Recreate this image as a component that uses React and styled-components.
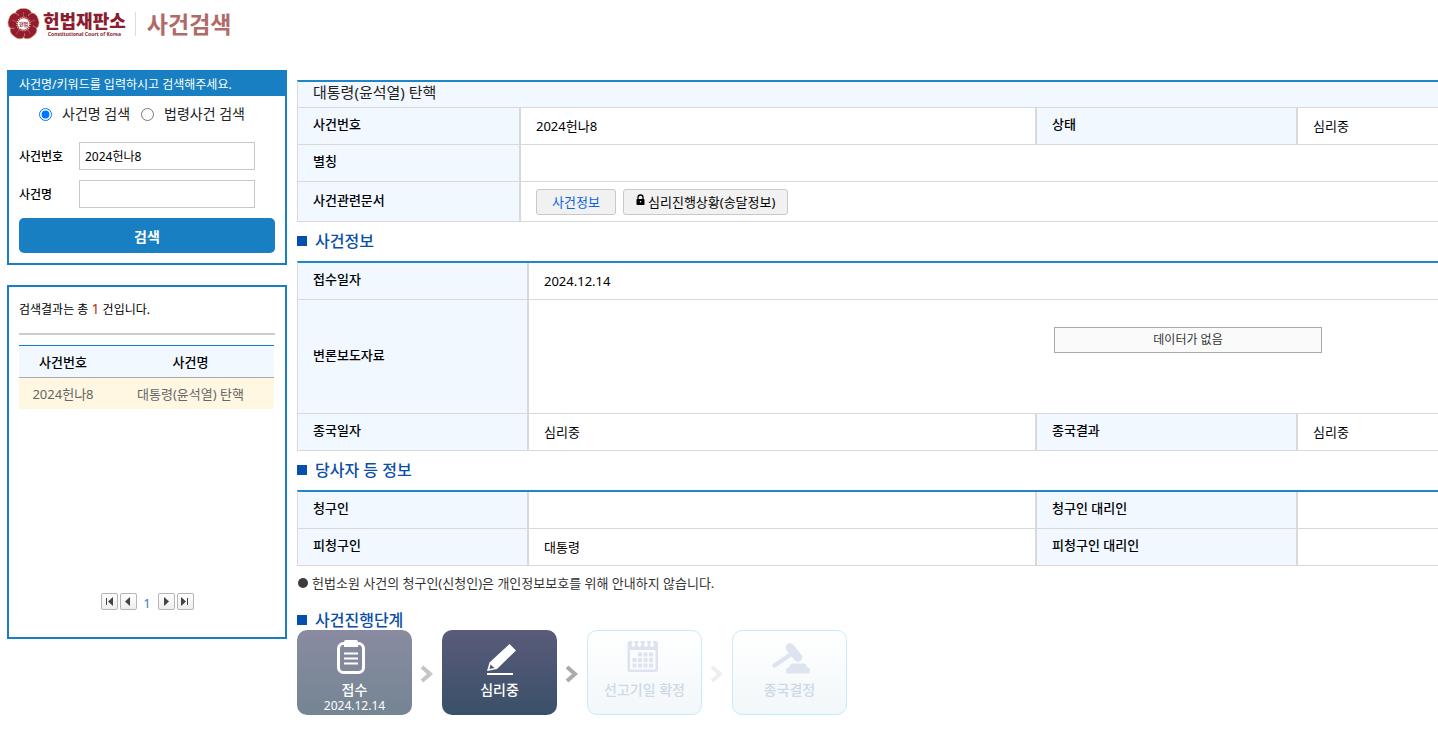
import React from "react";
import styled, { createGlobalStyle } from "styled-components";

const GlobalStyle = createGlobalStyle`
  * {
    box-sizing: border-box;
  }
  body {
    margin: 0;
    background: #fff;
    color: #000;
    font-family: "Noto Sans", "Noto Sans CJK KR", sans-serif;
    font-size: 13px;
    line-height: 20px;
  }
  input, button {
    font-family: inherit;
  }
`;

const Page = styled.div`
  padding: 8px 0 16px 7px;
`;

const Header = styled.header`
  display: flex;
  align-items: center;
  height: 32px;
`;

const Logo = styled.a`
  display: flex;
  align-items: center;
  gap: 3px;
  color: #8c1d2f;
  text-decoration: none;
`;

const LogoText = styled.span`
  display: flex;
  flex-direction: column;
  align-items: center;

  strong {
    font-size: 18px;
    line-height: 20px;
    font-weight: 800;
  }
  small {
    font-size: 5px;
    line-height: 6px;
    font-weight: 700;
  }
`;

const Title = styled.h1`
  margin: 0 0 0 9px;
  padding-left: 11px;
  border-left: 1px solid #ddd;
  color: #b06a68;
  font-size: 23px;
  line-height: 24px;
  font-weight: 700;
`;

const Content = styled.div`
  display: flex;
  align-items: flex-start;
  gap: 10px;
  margin-top: 30px;
`;

const Sidebar = styled.aside`
  flex: none;
  width: 280px;
  display: flex;
  flex-direction: column;
  gap: 20px;
`;

const Panel = styled.section`
  border: 2px solid #177fc2;
`;

const PanelTitle = styled.h2`
  margin: 0;
  padding: 2px 10px 0;
  background: #177fc2;
  color: #fff;
  font-size: 12px;
  line-height: 22px;
  font-weight: 400;
`;

const SearchForm = styled.form`
  padding: 8px 10px 10px;
`;

const RadioRow = styled.div`
  display: flex;
  gap: 11px;
  height: 20px;
  padding-left: 20px;
`;

const RadioLabel = styled.label`
  display: flex;
  align-items: center;
  gap: 10px;
  color: #222;
  font-size: 14px;

  input {
    width: 13px;
    height: 13px;
    margin: 0;
  }
`;

const Field = styled.div`
  display: flex;
  align-items: center;
  margin-top: ${({ $first }) => ($first ? "18px" : "10px")};

  label {
    width: 60px;
    padding-top: 2px;
    font-size: 12px;
    font-weight: 500;
  }
  input {
    width: 176px;
    height: 28px;
    padding: 0 5px;
    border: 1px solid #c8c8c8;
    font-size: 12px;
  }
`;

const SearchButton = styled.button`
  display: block;
  width: 100%;
  height: 35px;
  margin-top: 10px;
  padding: 0;
  border: 0;
  border-radius: 5px;
  background: #177fc2;
  color: #fff;
  font-size: 14px;
  font-weight: 700;
`;

const ResultBody = styled.div`
  display: flex;
  flex-direction: column;
  min-height: 350px;
  padding: 12px 10px 27px;
`;

const ResultCount = styled.p`
  margin: 0 0 10px;
  padding-bottom: 13px;
  border-bottom: 2px solid #ccc;
  font-size: 12px;

  span {
    color: #b5311c;
    font-size: 14px;
  }
`;

const ResultTable = styled.table`
  width: 255px;
  table-layout: fixed;
  border-collapse: separate;
  border-spacing: 0;
  text-align: center;

  th {
    height: 33px;
    padding: 0;
    border-top: 1px solid #177fc2;
    border-bottom: 1px solid #aaa;
    background: #f1f8ff;
    font-weight: 500;
  }
  th:first-child {
    width: 88px;
  }
  td {
    height: 31px;
    padding: 0;
    background: #fff7e2;
    color: #666;
  }
`;

const Pager = styled.nav`
  display: flex;
  justify-content: center;
  align-items: center;
  gap: 2px;
  height: 17px;
  margin-top: auto;

  span {
    width: 17px;
    padding-top: 2px;
    color: #3b78c4;
    text-align: center;
    font-size: 13px;
  }
`;

const PagerButton = styled.button`
  display: flex;
  align-items: center;
  justify-content: center;
  width: 17px;
  height: 17px;
  padding: 0;
  border: 1px solid #b5b5b5;
  border-radius: 2px;
  background: linear-gradient(#fff, #eee);
`;

const Main = styled.main`
  flex: 1;
  min-width: 0;
  padding-top: 10px;
`;

const InfoTable = styled.table`
  width: 100%;
  table-layout: fixed;
  border-collapse: separate;
  border-spacing: 0;
  border-top: 2px solid #2186c7;
  border-left: 1px solid #d9d9d9;
  text-align: left;
`;

const LabelCol = styled.col`
  width: ${({ $wide }) => ($wide ? "229px" : "221px")};
`;

const SideLabelCol = styled.col`
  width: 261px;
`;

const SideValueCol = styled.col`
  width: 142px;
`;

const TitleCell = styled.th`
  height: 26px;
  padding: 0 15px 4px;
  border-bottom: 1px solid #d9d9d9;
  background: #f1f8ff;
  color: #222;
  font-size: 15px;
  line-height: 21px;
  font-weight: 400;
`;

const Label = styled.th`
  padding: 0 15px 4px;
  border-bottom: 1px solid #d9d9d9;
  background: #f1f8ff;
  font-weight: 500;
`;

const Value = styled.td`
  height: ${({ $height }) => $height || 37}px;
  padding: 0 15px;
  border-left: 2px solid #d9d9d9;
  border-bottom: 1px solid #d9d9d9;

  & + ${Label} {
    border-left: 2px solid #d9d9d9;
  }
`;

const ButtonRow = styled.div`
  display: flex;
  gap: 7px;
`;

const DocButton = styled.button`
  display: flex;
  align-items: center;
  justify-content: center;
  gap: 3px;
  height: 26px;
  min-width: 80px;
  padding: 0 12px;
  border: 1px solid #c8c8c8;
  border-radius: 3px;
  background: #f1f1f1;
  color: ${({ $active }) => ($active ? "#0b5fe0" : "#000")};
  font-size: 13px;
`;

const EmptyWrap = styled.div`
  display: flex;
  justify-content: flex-end;
  height: 60px;
  padding-right: 101px;
`;

const EmptyBox = styled.div`
  width: 268px;
  height: 26px;
  border: 1px solid #aaa;
  background: #fafafa;
  color: #333;
  font-size: 12px;
  line-height: 24px;
  text-align: center;
`;

const Heading = styled.h3`
  display: flex;
  align-items: center;
  gap: 8px;
  margin: 0;
  padding: 9px 0 ${({ $tight }) => ($tight ? "0" : "10px")};
  color: #0a4ea8;
  font-size: 16px;
  line-height: 20px;
  font-weight: 500;

  &::before {
    content: "";
    width: 10px;
    height: 10px;
    background: #0450ae;
  }
`;

const Note = styled.p`
  display: flex;
  align-items: center;
  gap: 4px;
  height: 35px;
  margin: 0;
  padding: 0 1px 1px;
  color: #333;

  &::before {
    content: "";
    width: 10px;
    height: 10px;
    border-radius: 50%;
    background: #3c3c3c;
  }
`;

const Steps = styled.ol`
  display: flex;
  margin: 0;
  padding: 0;
  list-style: none;
`;

const stepColors = {
  done: "linear-gradient(#8a8ba1, #748593)",
  current: "linear-gradient(#595b79, #3a5069)",
  waiting: "linear-gradient(#fff, #f2f7f9)",
};

const Step = styled.li`
  display: flex;
  align-items: center;
`;

const StepCard = styled.div`
  display: flex;
  flex-direction: column;
  align-items: center;
  width: 115px;
  height: 85px;
  padding-top: 8px;
  border: 1px solid ${({ $state }) => ($state === "waiting" ? "#c8eafd" : "transparent")};
  border-radius: 10px;
  background: ${({ $state }) => stepColors[$state]} border-box;
  color: ${({ $state }) => ($state === "waiting" ? "#ced8e6" : "#fff")};

  strong {
    margin-top: 5px;
    font-weight: 500;
    font-size: 14px;
    line-height: 16px;
  }
  span {
    font-size: 12px;
    line-height: 15px;
  }
`;

const Arrow = styled.svg`
  width: 30px;
  height: 20px;
  padding: 2px 9px 0 7px;
  color: ${({ $color }) => $color};
`;

const petals = [0, 72, 144, 216, 288];

const Emblem = () => (
  <svg width="33" height="33" viewBox="-16.5 -16 33 33" aria-hidden="true">
    {petals.map((angle) => (
      <path
        key={angle}
        transform={`rotate(${angle})`}
        d="M0 0L-7.500 -8.500Q-9 -12 -6 -14Q-3.500 -16 0 -15.500Q3.500 -16 6 -14Q9 -12 7.500 -8.500Z"
        fill="#941c30"
        stroke="#d9a878"
        strokeWidth="0.600"
      />
    ))}
    <circle r="9.500" fill="#941c30" />
    {petals.map((angle) => (
      <path key={angle} transform={`rotate(${angle})`} d="M0 -7V-12" stroke="#c98568" strokeWidth="0.500" />
    ))}
    <circle r="6.500" fill="none" stroke="#e9c3a5" strokeWidth="1.500" strokeDasharray="1 1" />
    <circle r="5.800" fill="#fff" />
    <text y="1.800" textAnchor="middle" fontSize="5" fontWeight="700" fill="#8c1d2f">
      헌법
    </text>
  </svg>
);

const LockIcon = () => (
  <svg width="9" height="12" viewBox="0 0 9 12" style={{ marginBottom: 4 }} aria-hidden="true">
    <path d="M2 6V3.500a2.500 2.500 0 0 1 5 0V6" fill="none" stroke="#000" strokeWidth="1.300" />
    <rect x="0.500" y="5" width="8" height="6" rx="0.800" />
    <circle cx="4.500" cy="7.700" r="0.800" fill="#fff" />
  </svg>
);

const pagerPaths = {
  first: "M2 1H3V8H2ZM9 0V9L4 4.500Z",
  prev: "M7 0V9L2 4.500Z",
  next: "M3 0V9L8 4.500Z",
  last: "M1 0V9L6 4.500ZM7 1H8V8H7Z",
};

const PagerIcon = ({ type }) => (
  <svg width="10" height="9" viewBox="0 0 10 9" fill="#444" aria-hidden="true">
    <path d={pagerPaths[type]} />
  </svg>
);

const ReceiptIcon = () => (
  <svg width="38" height="38" viewBox="4 0 38 38" fill="none" stroke="currentColor" aria-hidden="true">
    <rect x="6.500" y="4.500" width="25" height="29" rx="5" strokeWidth="3" />
    <path d="M12 3Q12 1 14 1H24Q26 1 26 3V8H12Z" fill="currentColor" stroke="none" />
    <path d="M12 14.500H26M12 19.500H26M12 24.500H26" strokeWidth="2" />
  </svg>
);

const PencilIcon = () => (
  <svg width="38" height="38" viewBox="0 0 38 38" fill="currentColor" aria-hidden="true">
    <path d="M28.500 5L35 11.500L16 30L6 32L8.500 23.500Z" />
    <path d="M9.500 25.500L8.500 30L13.500 29Z" fill="#4c5673" />
    <path d="M6 34H32V36H6Z" />
  </svg>
);

const CalendarIcon = () => (
  <svg width="38" height="38" viewBox="0 0 38 38" aria-hidden="true">
    <path
      fillRule="evenodd"
      fill="#dde4ef"
      d="M4 2H29.500Q32 2 32 5V30.500Q32 33 29.500 33H4Q1.500 33 1.500 30.500V5Q1.500 2 4 2ZM4 11V30.500H29.500V11Z"
    />
    <g fill="#fff">
      {[7.5, 13.5, 20, 26].map((x) => (
        <path key={x} d={`M${x - 1} 1.500H${x + 1}V4A1.900 1.900 0 1 1 ${x - 1} 4Z`} />
      ))}
    </g>
    <g fill="#dde4ef">
      {[13.5, 19, 24.5].map((y) =>
        [6.5, 12, 17.5, 23].map((x) =>
          x === 6.5 && y === 13.5 ? null : <rect key={`${x}-${y}`} x={x} y={y} width="4" height="4" rx="0.500" />
        )
      )}
    </g>
  </svg>
);

const GavelIcon = () => (
  <svg width="40" height="38" viewBox="0 0 40 38" fill="#dde4ef" aria-hidden="true">
    <path d="M4.500 26.500L20 16" stroke="#dde4ef" strokeWidth="4.500" strokeLinecap="round" />
    <path d="M20 8.500L28 18.500" stroke="#dde4ef" strokeWidth="8.500" strokeLinecap="round" />
    <path d="M20 26Q21 24.500 22.500 24.500H34Q35.500 24.500 36 26L37 28.500H37.500Q40 29 40 31V32Q40 34.500 37.500 34.500H18.500Q16 34.500 16 32V31Q16 29 18.500 28.500H19Z" />
  </svg>
);

const steps = [
  { name: "접수", date: "2024.12.14", state: "done", Icon: ReceiptIcon, arrow: "#c5c5c5" },
  { name: "심리중", state: "current", Icon: PencilIcon, arrow: "#ababab" },
  { name: "선고기일 확정", state: "waiting", Icon: CalendarIcon, arrow: "#eee" },
  { name: "종국결정", state: "waiting", Icon: GavelIcon },
];

const Columns = ({ wide }) => (
  <colgroup>
    <LabelCol $wide={wide} />
    <col />
    <SideLabelCol />
    <SideValueCol />
  </colgroup>
);

const SearchPanel = () => (
  <Panel>
    <PanelTitle>사건명/키워드를 입력하시고 검색해주세요.</PanelTitle>
    <SearchForm onSubmit={(e) => e.preventDefault()}>
      <RadioRow>
        <RadioLabel>
          <input type="radio" name="searchType" defaultChecked />
          사건명 검색
        </RadioLabel>
        <RadioLabel>
          <input type="radio" name="searchType" />
          법령사건 검색
        </RadioLabel>
      </RadioRow>
      <Field $first>
        <label htmlFor="caseNo">사건번호</label>
        <input id="caseNo" type="text" defaultValue="2024헌나8" />
      </Field>
      <Field>
        <label htmlFor="caseName">사건명</label>
        <input id="caseName" type="text" />
      </Field>
      <SearchButton type="submit">검색</SearchButton>
    </SearchForm>
  </Panel>
);

const ResultPanel = () => (
  <Panel>
    <ResultBody>
      <ResultCount>
        검색결과는 총 <span>1</span> 건입니다.
      </ResultCount>
      <ResultTable>
        <thead>
          <tr>
            <th>사건번호</th>
            <th>사건명</th>
          </tr>
        </thead>
        <tbody>
          <tr>
            <td>2024헌나8</td>
            <td>대통령(윤석열) 탄핵</td>
          </tr>
        </tbody>
      </ResultTable>
      <Pager>
        <PagerButton type="button" aria-label="처음">
          <PagerIcon type="first" />
        </PagerButton>
        <PagerButton type="button" aria-label="이전">
          <PagerIcon type="prev" />
        </PagerButton>
        <span>1</span>
        <PagerButton type="button" aria-label="다음">
          <PagerIcon type="next" />
        </PagerButton>
        <PagerButton type="button" aria-label="마지막">
          <PagerIcon type="last" />
        </PagerButton>
      </Pager>
    </ResultBody>
  </Panel>
);

const App = () => {
  return (
    <Page>
      <GlobalStyle />
      <Header>
        <Logo href="#">
          <Emblem />
          <LogoText>
            <strong>헌법재판소</strong>
            <small>Constitutional Court of Korea</small>
          </LogoText>
        </Logo>
        <Title>사건검색</Title>
      </Header>
      <Content>
        <Sidebar>
          <SearchPanel />
          <ResultPanel />
        </Sidebar>
        <Main>
          <InfoTable>
            <Columns />
            <tbody>
              <tr>
                <TitleCell colSpan={4}>대통령(윤석열) 탄핵</TitleCell>
              </tr>
              <tr>
                <Label>사건번호</Label>
                <Value>2024헌나8</Value>
                <Label>상태</Label>
                <Value>심리중</Value>
              </tr>
              <tr>
                <Label>별칭</Label>
                <Value colSpan={3} />
              </tr>
              <tr>
                <Label>사건관련문서</Label>
                <Value colSpan={3} $height={40}>
                  <ButtonRow>
                    <DocButton type="button" $active>
                      사건정보
                    </DocButton>
                    <DocButton type="button">
                      <LockIcon />
                      심리진행상황(송달정보)
                    </DocButton>
                  </ButtonRow>
                </Value>
              </tr>
            </tbody>
          </InfoTable>

          <Heading>사건정보</Heading>
          <InfoTable>
            <Columns wide />
            <tbody>
              <tr>
                <Label>접수일자</Label>
                <Value colSpan={3}>2024.12.14</Value>
              </tr>
              <tr>
                <Label>변론보도자료</Label>
                <Value colSpan={3} $height={114}>
                  <EmptyWrap>
                    <EmptyBox>데이터가 없음</EmptyBox>
                  </EmptyWrap>
                </Value>
              </tr>
              <tr>
                <Label>종국일자</Label>
                <Value>심리중</Value>
                <Label>종국결과</Label>
                <Value>심리중</Value>
              </tr>
            </tbody>
          </InfoTable>

          <Heading>당사자 등 정보</Heading>
          <InfoTable>
            <Columns wide />
            <tbody>
              <tr>
                <Label>청구인</Label>
                <Value />
                <Label>청구인 대리인</Label>
                <Value />
              </tr>
              <tr>
                <Label>피청구인</Label>
                <Value>대통령</Value>
                <Label>피청구인 대리인</Label>
                <Value />
              </tr>
            </tbody>
          </InfoTable>
          <Note>헌법소원 사건의 청구인(신청인)은 개인정보보호를 위해 안내하지 않습니다.</Note>

          <Heading $tight>사건진행단계</Heading>
          <Steps>
            {steps.map(({ name, date, state, Icon, arrow }) => (
              <Step key={name}>
                <StepCard $state={state}>
                  <Icon />
                  <strong>{name}</strong>
                  {date && <span>{date}</span>}
                </StepCard>
                {arrow && (
                  <Arrow $color={arrow} viewBox="0 0 14 18" aria-hidden="true">
                    <path d="M3 2L11 9L3 16" fill="none" stroke="currentColor" strokeWidth="4" />
                  </Arrow>
                )}
              </Step>
            ))}
          </Steps>
        </Main>
      </Content>
    </Page>
  );
};

export default App;
